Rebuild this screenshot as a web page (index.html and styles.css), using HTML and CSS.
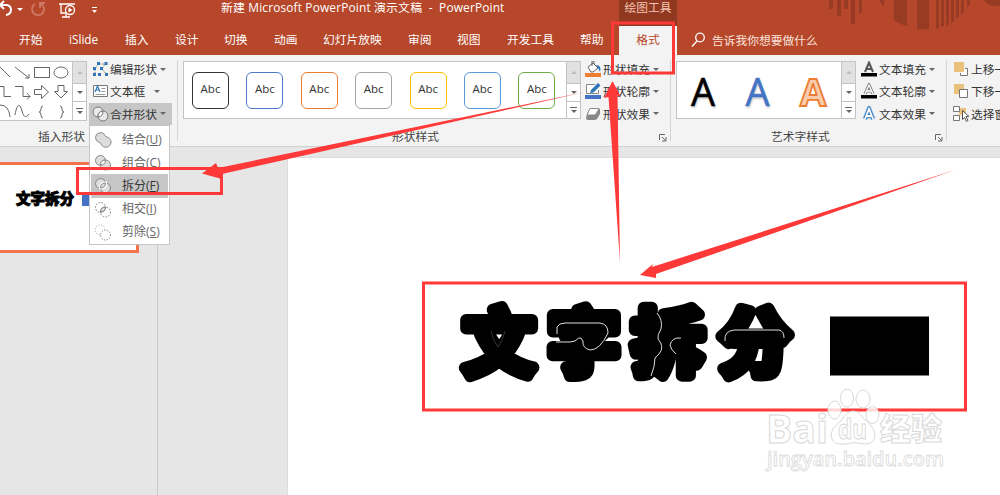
FILE: index.html
```html
<!DOCTYPE html>
<html lang="zh-CN">
<head>
<meta charset="utf-8">
<title>新建 Microsoft PowerPoint 演示文稿 - PowerPoint</title>
<link rel="stylesheet" href="styles.css">
</head>
<body>
<div class="app">
<header class="head">
  <svg class="decor" width="200" height="32" viewBox="0 0 200 32" fill="#983b24">
    <path d="M29 0h4v9h-4zM37 0h4v16h-4zM44 0h4v9h-4zM51 0h4v24h-4zM59 0h3v13h-3zM79 0h5v7q-3-3-5-7zM94 0h13v26q-8-2-13-6zM117 0h12v29q-7 1-12 0zM136 0h3v28l-3 1zM141 0h3v26l-3 1zM146 0h3v24l-3 2zM151 0h3v21l-3 2zM156 0h3v17l-3 2zM161 0h3v12l-3 3zM167 0h3v5l-3 2z"/><circle cx="195" cy="-7" r="13"/>
  </svg>
  <div class="titlebar">
    <svg class="quick" width="105" height="20" viewBox="0 0 105 20" fill="none" stroke="#fff">
      <path d="M1 5H7Q11 6 11 10Q11 14 6 15" stroke-width="2"/><path d="M4 1L0 5L4 9" stroke-width="2"/>
      <path d="M17 8h6l-3 3z" fill="#fff" stroke="none"/>
      <path d="M35 4a6 6 0 1 0 6 0M40 8V3h5" stroke="#cf7966" stroke-width="1.8"/>
      <path d="M59 4h16M61 4v9h6M62 17h8M66 14v3" stroke-width="1.3"/><circle cx="70" cy="10" r="4.5" fill="#b7472a" stroke-width="1.3"/><path d="M68.5 7.5v5l4-2.5z" fill="#fff" stroke="none"/>
      <path d="M92 7.500h5" /><path d="M92 10h5l-2.500 3z" fill="#fff" stroke="none"/>
    </svg>
    <div class="doc">新建 Microsoft PowerPoint 演示文稿 &nbsp;- &nbsp;PowerPoint</div>
    <div class="context">绘图工具</div>
  </div>
  <nav class="tabs">
    <span class="t50">开始</span><span class="t56">iSlide</span><span class="t50">插入</span><span class="t49">设计</span><span class="t50">切换</span><span class="t49">动画</span><span class="t85">幻灯片放映</span><span class="t49">审阅</span><span class="t50">视图</span><span class="t73">开发工具</span><span class="t39">帮助</span><span class="active">格式</span>
    <svg width="15" height="16" viewBox="0 0 15 16" fill="none" stroke="#fff" stroke-width="1.3"><circle cx="9" cy="5.500" r="4.300"/><path d="M6 9L1 14.500"/></svg>
    <span class="ask">告诉我你想要做什么</span>
  </nav>
</header>

<section class="ribbon">
  <div class="group g-insert">
    <div class="row">
      <div class="shapes">
        <svg width="72" height="57" viewBox="0 0 72 57" fill="none" stroke="#666">
          <path d="M0 5L10 15M15 5L29 16M29 12v4h-4"/><rect x="34.500" y="5.500" width="15" height="10"/><ellipse cx="61" cy="10.500" rx="7" ry="5.500"/>
          <path d="M0 24.500h4v10h7M15 24.500h8v10h7M27 31l3 3.500l-3 3M34.500 27.500h7v-4l7 6.500l-7 6.500v-4h-7zM58 23.500h6v6h3.500l-6.500 6.500l-6.500-6.500H58z"/>
          <path d="M0 43q9 0 10 12M15 53c2-12 5-12 7-4s5 6 7 3M43 44q-2 0-2 3t-2 3q2 0 2 3t2 3M60 44q2 0 2 3t2 3q-2 0-2 3t-2 3"/>
        </svg>
        <div class="scroll"><i class="up"></i><i class="down"></i><i class="more"></i></div>
      </div>
      <div class="cmds">
        <div class="cmd"><svg width="17" height="16" viewBox="0 0 17 16"><path d="M3 13V8L6 3H13L10 8L14 13" fill="none" stroke="#888" stroke-dasharray="2 1"/><path d="M5 1h3v3H5zM12.500 1h3v3h-3zM1 6h3v3H1zM8 6h3v3H8zM1 12h3v3H1zM6 12h3v3H6zM13 12h3v3h-3z" fill="#2f75b8"/></svg><span>编辑形状</span><b></b></div>
        <div class="cmd box"><svg width="17" height="16" viewBox="0 0 17 16" fill="none"><path d="M1.500 2.500h14v11h-14z" fill="#fff" stroke="#777"/><path d="M3 9l2.500-6L8 9M4 7h3" stroke="#2f75b8" stroke-width="1.200"/><path d="M9.500 5.500h4M9.500 8.500h4M3.500 11.500h10" stroke="#999"/></svg><span>文本框</span><b></b></div>
        <div class="cmd open"><svg width="17" height="16" viewBox="0 0 17 16" fill="#e9e9e9" stroke="#777"><circle cx="6" cy="6" r="5"/><circle cx="11" cy="10" r="5"/><path d="M6.100 11Q5.500 6 10.900 5Q11.500 10 6.100 11z" fill="#fff"/></svg><span>合并形状</span><b></b></div>
      </div>
    </div>
    <div class="label l1">插入形状</div>
  </div>

  <div class="group g-style">
    <div class="row">
      <div class="presets"><span class="p1">Abc</span><span class="p2">Abc</span><span class="p3">Abc</span><span class="p4">Abc</span><span class="p5">Abc</span><span class="p6">Abc</span><span class="p7">Abc</span></div>
      <div class="scroll"><i class="up"></i><i class="down"></i><i class="more"></i></div>
      <div class="cmds c2">
        <div class="cmd"><svg width="17" height="16" viewBox="0 0 17 16"><path d="M3 6l5-4 5 5-5 4H6z" fill="#fff" stroke="#666"/><path d="M7 5V0h2v3" fill="none" stroke="#666"/><path d="M11 4q6 0 4 7l-2-4z" fill="#2f75b8"/><path d="M0 12h16v4H0z" fill="#ed7d31"/></svg><span>形状填充</span><b></b></div>
        <div class="cmd"><svg width="17" height="16" viewBox="0 0 17 16"><path d="M10 1.500H1.500v9h12V7" fill="#fff" stroke="#888"/><path d="M5 10l1-3 7-7 2.500 2.500-7 7z" fill="#2f75b8"/><path d="M0 12h16v4H0z" fill="#4472c4"/></svg><span>形状轮廓</span><b></b></div>
        <div class="cmd"><svg width="17" height="16" viewBox="0 0 17 16"><path d="M2 8l3-5q1-1 3-1h5q2 0 2 2v4l-3 5q-1 1-3 1H3q-2 0-2-2z" fill="#888"/><path d="M5 2.500h8q1 0 .5 1L11 8q-.5 1-2 1H3q-1 0-.5-1z" fill="#fff" stroke="#888"/></svg><span>形状效果</span><b></b></div>
      </div>
    </div>
    <div class="label l2">形状样式</div><svg class="launch" width="9" height="9" viewBox="0 0 9 9" fill="none" stroke="#666"><path d="M7 1.500H1.500V7M4 4l3 3M8 4v4H4"/></svg>
  </div>

  <div class="group g-art">
    <div class="row">
      <div class="letters"><span class="a1">A</span><span class="a2">A</span><span class="a3">A</span></div>
      <div class="scroll"><i class="up"></i><i class="down"></i><i class="more"></i></div>
      <div class="cmds c3">
        <div class="cmd"><svg width="17" height="16" viewBox="0 0 17 16"><path d="M4 11L8 1.500 12 11M5 8h6" fill="none" stroke="#555" stroke-width="2"/><path d="M0 12h16v3.500H0z"/></svg><span>文本填充</span><b></b></div>
        <div class="cmd"><svg width="17" height="16" viewBox="0 0 17 16"><path d="M4 11L8 2 12 11M5 8h6" fill="none" stroke="#777" stroke-width="3"/><path d="M4 11L8 2 12 11M5 8h6" fill="none" stroke="#fff" stroke-width="1.300"/><path d="M0 12h16v3.500H0z"/></svg><span>文本轮廓</span><b></b></div>
        <div class="cmd"><svg width="17" height="16" viewBox="0 0 17 16"><path d="M4 13L8 3 12 13M5 10h6" fill="none" stroke="#b5d3ef" stroke-width="5.500"/><path d="M4 13L8 3 12 13M5 10h6" fill="none" stroke="#2f75b8" stroke-width="3.700"/><path d="M4 13L8 3 12 13M5 10h6" fill="none" stroke="#fff" stroke-width="1.800"/></svg><span>文本效果</span><b></b></div>
      </div>
    </div>
    <div class="label l3">艺术字样式</div><svg class="launch" width="9" height="9" viewBox="0 0 9 9" fill="none" stroke="#666"><path d="M7 1.500H1.500V7M4 4l3 3M8 4v4H4"/></svg>
  </div>

  <div class="group g-order">
    <div class="cmds c4">
      <div class="cmd"><svg width="17" height="16" viewBox="0 0 17 16"><path d="M12 7.500h2.500v7h-7V12" fill="#fff" stroke="#777"/><path d="M1 1h10v10H1z" fill="#ebc07a"/></svg><span>上移一</span></div>
      <div class="cmd"><svg width="17" height="16" viewBox="0 0 17 16"><path d="M1 1h10v10H1z" fill="#ebc07a"/><path d="M6.500 6.500h8v8h-8z" fill="#fff" stroke="#777"/></svg><span>下移一</span></div>
      <div class="cmd"><svg width="17" height="16" viewBox="0 0 17 16"><path d="M6 2h7v7H6z" fill="#ebc07a"/><path d="M.5.500h6v5h-6zM.5 9.500h6v5h-6z" fill="#fff" stroke="#777"/><path d="M9.500 4.500v9l2-2 2 4 1.500-1-2-4h3z" fill="#fff" stroke="#555"/></svg><span>选择窗</span></div>
    </div>
  </div>
</section>

<main class="work">
  <aside class="thumbs">
    <div class="thumb"><span>文字拆分</span><i></i></div>
  </aside>
  <div class="stage"><div class="slide">
    <svg width="712" height="337" viewBox="288 158 712 337">
      <g class="display">
        <text x="463" y="369">文</text><text x="548" y="369">字</text><text x="632" y="369">拆</text><text x="719" y="369">分</text>
      </g>
      <g fill="none" stroke="#ddd" stroke-width="1">
        <path d="M491 331Q493 341 498 347Q503 340 505 331" stroke="#555" stroke-width=".6"/>
        <path d="M557 334V327Q559 323 565 323H600Q608 324 608 333Q600 350 590 350Q582 348 583 341L581 338Q579 337 575 341L570 342H556"/>
        <path d="M657 313Q663 320 661 329Q657 335 658 339Q665 347 659 354L655 358Q655 366 651 376M681 338Q672 337 670 345Q671 350 676 354"/>
        <path d="M725 341Q724 331 734 330H779Q784 331 784 338"/>
      </g>
      <rect x="830" y="316.500" width="99" height="59"/>
    </svg>
  </div></div>
</main>

<div class="menu">
  <div><svg width="18" height="17" viewBox="0 0 18 17" fill="#ddd" stroke="#888"><path d="M1.500 6.500A5 5 0 0 1 11 4.500Q11.500 6 13 6A5.200 5.200 0 1 1 7 13Q6.500 11.500 5 11.300Q1.500 10 1.500 6.500z"/></svg><span>结合(<u>U</u>)</span></div>
  <div><svg width="18" height="17" viewBox="0 0 18 17" fill="#ddd" stroke="#888"><circle cx="6.500" cy="6.500" r="5"/><circle cx="11.500" cy="11" r="5"/><path d="M6.500 11Q6.500 6 11.500 6Q11.500 11 6.500 11z" fill="#fff"/></svg><span>组合(<u>C</u>)</span></div>
  <div class="hot"><svg width="18" height="17" viewBox="0 0 18 17" fill="#ddd" stroke="#888"><circle cx="6.500" cy="6.500" r="5"/><circle cx="11.500" cy="11" r="5"/><path d="M6.500 11Q6.500 6 11.500 6Q11.500 11 6.500 11z" stroke="#fff" stroke-width="3"/><path d="M6.500 11Q6.500 6 11.500 6Q11.500 11 6.500 11z"/></svg><span>拆分(<u>F</u>)</span></div>
  <div><svg width="18" height="17" viewBox="0 0 18 17" fill="none" stroke="#777"><g stroke-dasharray="1.500 1.500"><circle cx="6.500" cy="6.500" r="5"/><circle cx="11.500" cy="11" r="5"/></g><path d="M6.500 11Q6.500 6 11.500 6Q11.500 11 6.500 11z" fill="#ddd"/></svg><span>相交(<u>I</u>)</span></div>
  <div><svg width="18" height="17" viewBox="0 0 18 17" fill="none" stroke="#777" stroke-dasharray="1.200 1.500"><path d="M6 11A5 5 0 1 1 11 5" stroke="#aaa"/><circle cx="11.500" cy="11" r="5"/></svg><span>剪除(<u>S</u>)</span></div>
</div>

<svg class="marks" width="1000" height="495" viewBox="0 0 1000 495">
  <g fill="none" stroke="#ff3838" stroke-width="3">
    <rect x="77.500" y="168.500" width="144" height="25"/><rect x="612.500" y="23" width="61" height="50"/><rect x="423.500" y="283" width="542" height="127"/>
  </g>
  <g fill="#ff3838">
    <path d="M585 92L218 168L216 163L202 173.500L220 178.500L220 174.500Z"/>
    <path d="M620 262L617.500 95L621 97L612.500 81L604 98L608.500 97Z"/>
    <path d="M955 170L652 267L653 264L640 275L656 278L656 274Z"/>
  </g>
  <g class="watermark">
    <text class="wm-big" x="766" y="443" textLength="62" lengthAdjust="spacingAndGlyphs">Bai</text>
    <ellipse cx="847" cy="398" rx="6.500" ry="9"/><ellipse cx="863" cy="399" rx="7" ry="9"/><ellipse cx="834.500" cy="410" rx="6.500" ry="9"/><ellipse cx="872.500" cy="415" rx="6.500" ry="8.500"/>
    <path d="M853 411Q859 411 863 418Q875 427 875 436Q873 445 864 444Q854 441 846 444Q833 446 831 436Q831 428 841 421Q847 411 853 411Z"/>
    <text class="wm-du" x="838" y="439" textLength="29" lengthAdjust="spacingAndGlyphs">du</text>
    <text class="wm-cn" x="880" y="440" textLength="62" lengthAdjust="spacingAndGlyphs">经验</text>
    <text class="wm-url" x="767" y="466" textLength="177" lengthAdjust="spacingAndGlyphs">jingyan.baidu.com</text>
  </g>
</svg>
</div>
</body>
</html>
```
FILE: styles.css
```css
* { box-sizing: border-box; }
body { margin: 0; font: 11.75px/16px "Open Sans", "Noto Sans CJK SC", sans-serif; color: #333; }
svg { display: block; flex: none; }
.app { position: relative; width: 1000px; height: 495px; overflow: hidden; display: flex; flex-direction: column; background: #e6e6e6; }
.head { position: relative; height: 55px; flex: none; background: #b7472a; color: #fff; }
.decor { position: absolute; right: 0; top: 0; }
.titlebar { height: 26px; display: flex; }
.doc { width: 398px; margin-left: 116px; white-space: nowrap; font-size: 11.9px; letter-spacing: .15px; line-height: 15px; }
.context { width: 58px; background: #913820; color: #f3c5b5; text-align: center; line-height: 15px; }
.tabs { height: 29px; display: flex; padding-left: 19px; line-height: 27px; white-space: nowrap; }
.t39 { width: 39px; } .t49 { width: 49px; } .t50 { width: 50px; } .t56 { width: 56px; } .t73 { width: 73px; } .t85 { width: 85px; }
.tabs .active { width: 58px; background: #f3f3f3; color: #b7472a; text-align: center; }
.tabs svg { margin: 6px 6px 0 14px; }
.ask { color: #fbe3dc; line-height: 29px; }
.ribbon { height: 92px; flex: none; display: flex; background: #f3f3f3; border-bottom: 1px solid #d2d2d2; }
.group { position: relative; padding-top: 6px; flex: none; }
.group::after { content: ""; position: absolute; right: 0; top: 5px; height: 81px; border-right: 1px solid #d5d5d5; }
.g-insert { width: 178px; } .g-style { width: 493px; padding-left: 5px; } .g-art { width: 276px; padding-left: 5px; }
.g-order { width: 53px; overflow: hidden; } .g-order::after { display: none; }
.row { display: flex; height: 66px; }
.shapes { display: flex; width: 87px; height: 60px; background: #fff; border-top: 1px solid #c3c3c3; border-bottom: 1px solid #c3c3c3; }
.shapes .scroll { margin-top: -1px; height: 60px; }
.scroll { width: 15px; height: 58px; display: grid; grid-template-rows: 21px 18px 1fr; border: 1px solid #c3c3c3; background: #fff; flex: none; }
.scroll i { display: grid; place-content: center; justify-items: center; gap: 2px; }
.scroll i + i { border-top: 1px solid #c3c3c3; }
.scroll i::after { content: ""; border: 3px solid transparent; border-top-color: #666; border-bottom: 0; }
.scroll .up { background: #e1e1e1; }
.scroll .up::after { border: 3px solid transparent; border-bottom-color: #bbb; border-top: 0; }
.scroll .more::before { content: ""; width: 7px; height: 1px; background: #666; }
.cmds { display: flex; flex-direction: column; padding-left: 2px; margin-top: -3px; }
.cmd { display: flex; align-items: center; height: 22.300px; padding-left: 3px; white-space: nowrap; width: 83px; flex: none; }
.cmd span { margin-left: 1px; width: 48px; }
.cmd b { margin-left: 2px; border: 3px solid transparent; border-top-color: #666; border-bottom: 0; }
.cmd.box span { width: 43px; }
.cmd.box b { margin-left: 1px; }
.cmd.open { background: #c6c6c6; }
.c2 .cmd { padding-left: 2px; }
.c3 .cmd { padding-left: 3px; }
.c4 { padding-left: 3px; }
.c4 .cmd { width: 50px; }
.c4 span { width: 36px; }
.label { color: #444; line-height: 16px; margin-top: 1px; }
.l1 { padding-left: 38px; } .l2 { padding-left: 209px; } .l3 { padding-left: 95px; }
.launch { position: absolute; right: 4px; bottom: 4px; }
.presets { width: 383px; height: 58px; background: #fff; border: 1px solid #c3c3c3; border-right: 0; display: flex; gap: 17.400px; padding: 10px 0 0 8px; }
.presets span { width: 37px; height: 37px; flex: none; border: 1.500px solid #333; border-radius: 6px; text-align: center; line-height: 31px; font-size: 11.5px; }
.presets .p2 { border-color: #4f79c6; } .presets .p3 { border-color: #ed7d31; } .presets .p4 { border-color: #a5a5a5; }
.presets .p5 { border-color: #ffc000; } .presets .p6 { border-color: #5b9bd5; } .presets .p7 { border-color: #70ad47; }
.letters { width: 165px; height: 58px; background: #fff; border: 1px solid #c3c3c3; border-right: 0; display: flex; padding-left: 14px; font-size: 38px; line-height: 59px; font-weight: 500; }
.letters span { width: 54.500px; flex: none; text-shadow: 1px 2px 2px #ccc; }
.letters .a1 { color: #000; -webkit-text-stroke: .6px #000; } .letters .a2 { color: #4472c4; -webkit-text-stroke: .6px #4472c4; } .letters .a3 { color: #f8cbad; -webkit-text-stroke: 1.800px #ed7d31; font-weight: 700; width: 28px; text-shadow: none; }
.work { flex: 1; display: flex; min-height: 0; }
.thumbs { width: 158px; padding-top: 15px; border-right: 1px solid #c9c9c9; }
.thumb { width: 139px; height: 91px; background: #fff; border: 3px solid #f4734f; border-left: 0; display: flex; padding: 24px 0 0 16px; line-height: 18px; color: #000; }
.thumb span { font: 900 14.500px/18px "Noto Sans CJK SC", sans-serif; -webkit-text-stroke: 1px #000; width: 66px; white-space: nowrap; }
.thumb i { width: 18px; height: 12px; margin-top: 5px; background: #4472c4; }
.stage { flex: 1; padding: 11px 0 0 130px; }
.slide { height: 337px; background: #fff; box-shadow: 0 0 0 1px #dcdcdc; }
.display { font: 700 72px "Noto Sans CJK SC", sans-serif; stroke: #000; stroke-width: 12px; stroke-linejoin: round; }
.menu { position: absolute; left: 89px; top: 125px; width: 81px; height: 120px; border: 1px solid #c6c6c6; background: #fff; padding: 2px 1px; }
.menu div { height: 23.200px; display: flex; align-items: center; padding-left: 3px; color: #666; font-size: 12px; white-space: nowrap; }
.menu .hot { background: #c6c6c6; color: #333; }
.menu span { margin-left: 10px; }
.marks { position: absolute; left: 0; top: 0; pointer-events: none; }
.watermark { fill: #fff; fill-opacity: .8; stroke: #d9d9d9; stroke-width: 1px; font-family: "Open Sans", "Noto Sans CJK SC", sans-serif; }
.wm-big { font-size: 40px; font-weight: 700; }
.wm-du { font-size: 26px; font-weight: 700; }
.wm-cn { font-size: 31px; font-weight: 900; }
.wm-url { font-size: 20px; font-weight: 600; stroke-width: .8px; }
```
